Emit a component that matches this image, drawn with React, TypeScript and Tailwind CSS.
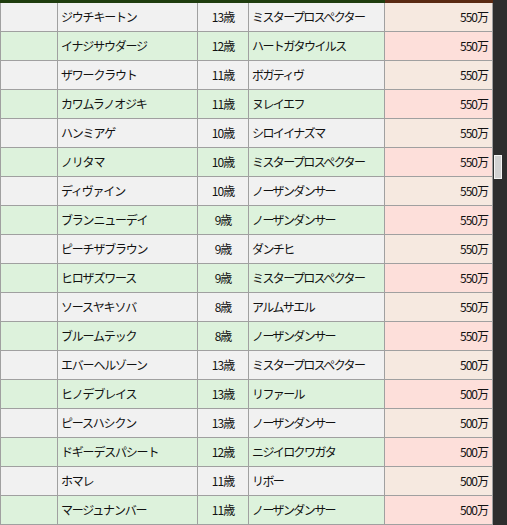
const rows: [string, string, string, string][] = [
  ['ジウチキートン', '13歳', 'ミスタープロスペクター', '550万'],
  ['イナジサウダージ', '12歳', 'ハートガタウイルス', '550万'],
  ['ザワークラウト', '11歳', 'ボガティヴ', '550万'],
  ['カワムラノオジキ', '11歳', 'ヌレイエフ', '550万'],
  ['ハンミアゲ', '10歳', 'シロイイナズマ', '550万'],
  ['ノリタマ', '10歳', 'ミスタープロスペクター', '550万'],
  ['ディヴァイン', '10歳', 'ノーザンダンサー', '550万'],
  ['ブランニューデイ', '9歳', 'ノーザンダンサー', '550万'],
  ['ピーチザブラウン', '9歳', 'ダンチヒ', '550万'],
  ['ヒロザズワース', '9歳', 'ミスタープロスペクター', '550万'],
  ['ソースヤキソバ', '8歳', 'アルムサエル', '550万'],
  ['ブルームテック', '8歳', 'ノーザンダンサー', '550万'],
  ['エバーヘルゾーン', '13歳', 'ミスタープロスペクター', '500万'],
  ['ヒノデブレイス', '13歳', 'リファール', '500万'],
  ['ピースハシクン', '13歳', 'ノーザンダンサー', '500万'],
  ['ドギーデスパシート', '12歳', 'ニジイロクワガタ', '500万'],
  ['ホマレ', '11歳', 'リボー', '500万'],
  ['マージュナンバー', '11歳', 'ノーザンダンサー', '500万'],
]

const cell = 'h-[29px] border-r border-b border-[#a0a0a0] flex items-center'

export default function App() {
  return (
    <div
      className="flex w-[507px] h-[525px] overflow-hidden bg-[#2e2e2e] text-[12px] tracking-[-1px] text-[#111]"
      style={{ fontFamily: '"Noto Sans CJK JP", "Noto Sans", sans-serif' }}
    >
      {/* Table */}
      <div className="w-[493px] flex flex-col">
        <div className="flex h-[3px]">
          <div className="w-[385px] bg-[#1f3d0e]" />
          <div className="w-[108px] bg-[#5a2a13]" />
        </div>
        {rows.map(([name, age, sire, price], i) => {
          const even = i % 2 === 1
          const bg = even ? 'bg-[#ddf2dc]' : 'bg-[#f1f1f1]'
          return (
            <div key={i} className="grid grid-cols-[58px_140px_51px_136px_108px]">
              <div className={`${cell} border-l ${bg}`} />
              <div className={`${cell} ${bg} pl-[3px] tracking-[-1.2px]`}>{name}</div>
              <div className={`${cell} ${bg} justify-center`}>{age}</div>
              <div className={`${cell} ${bg} pl-[3px] tracking-[-1.6px]`}>{sire}</div>
              <div className={`${cell} justify-end pr-[4px] ${even ? 'bg-[#fddfda]' : 'bg-[#f6e9e0]'}`}>{price}</div>
            </div>
          )
        })}
      </div>

      {/* Scrollbar */}
      <div className="w-[14px] flex flex-col pt-[155px] pl-[1px]">
        <div className="w-[8px] h-[24px] bg-[#d2d2d2] border border-[#f4f4f4]" />
      </div>
    </div>
  )
}
